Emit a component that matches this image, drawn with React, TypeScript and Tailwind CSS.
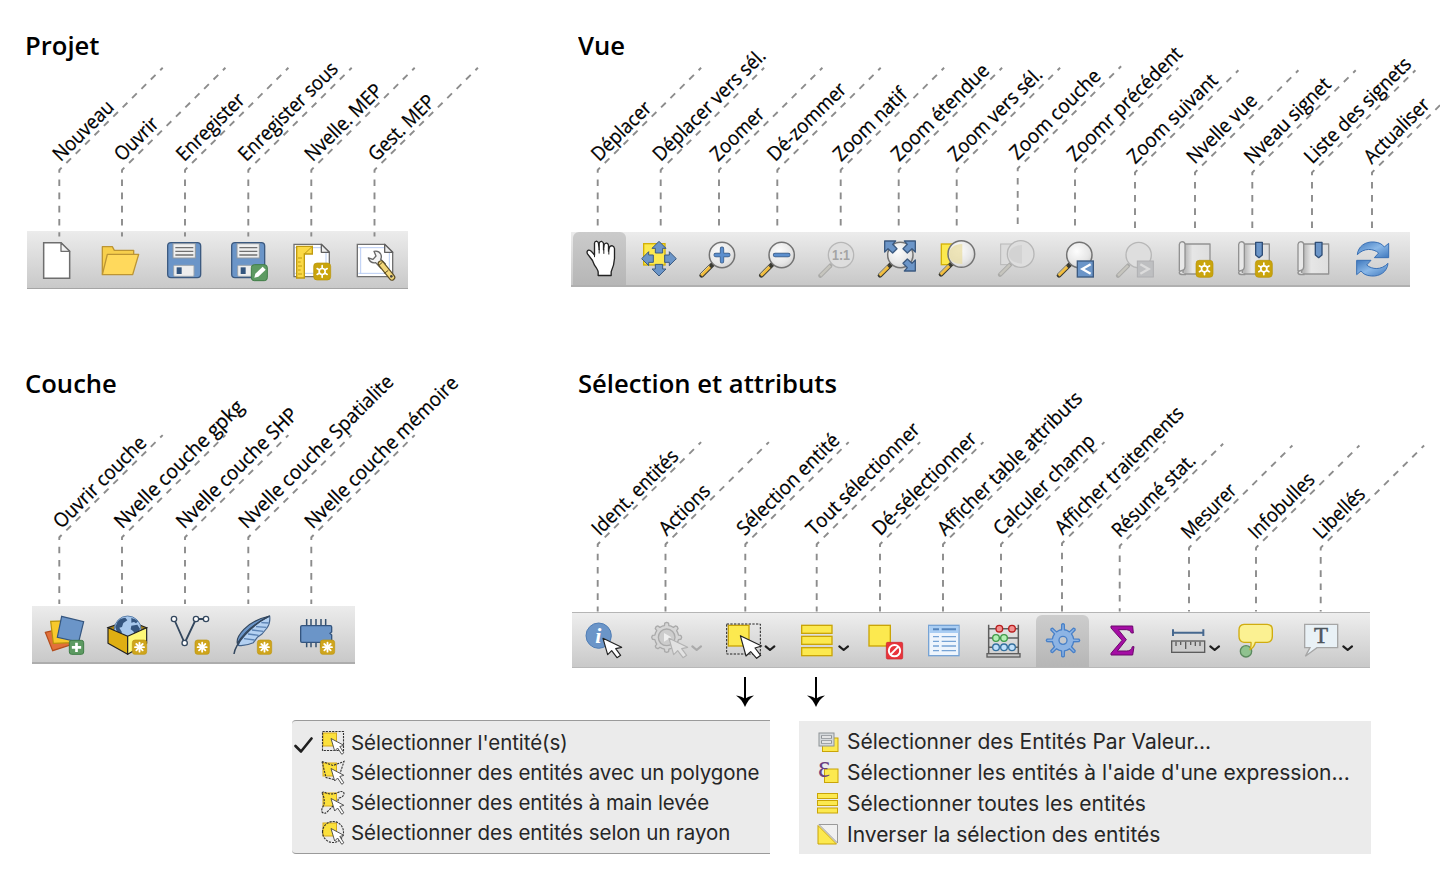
import type { ReactNode } from "react";

type Callout = { x: number; y: number; tx: number; text: string; len: number };

const BLUE = "#6b95c8";
const NAVY = "#3c5a80";
const YELLOW = "#fce94f";
const GOLD = "#c9a407";

const projet: Callout[] = [
  { x: 59.3, y: 170, tx: 61, text: "Nouveau", len: 76.5 },
  { x: 122, y: 170, tx: 122.5, text: "Ouvrir", len: 53 },
  { x: 185, y: 170, tx: 184.5, text: "Enregister", len: 87 },
  { x: 248.3, y: 170, tx: 246.5, text: "Enregister sous", len: 131 },
  { x: 311.3, y: 170, tx: 313, text: "Nvelle. MEP", len: 100 },
  { x: 374.5, y: 170, tx: 376.5, text: "Gest. MEP", len: 84.5 },
];

const vue: Callout[] = [
  { x: 597.7, y: 170, tx: 599.5, text: "Déplacer", len: 75.5 },
  { x: 660.7, y: 170, tx: 661, text: "Déplacer vers sél.", len: 149.5 },
  { x: 719, y: 170, tx: 718.5, text: "Zoomer", len: 67 },
  { x: 777.3, y: 170, tx: 775.5, text: "Dé-zommer", len: 102 },
  { x: 840.7, y: 170, tx: 841.5, text: "Zoom natif", len: 94.5 },
  { x: 898.7, y: 170, tx: 899.5, text: "Zoom étendue", len: 128.5 },
  { x: 956.7, y: 170, tx: 956.5, text: "Zoom vers sél.", len: 123 },
  { x: 1017.7, y: 168.5, tx: 1018, text: "Zoom couche", len: 118.5 },
  { x: 1075, y: 170, tx: 1075.5, text: "Zoomr précédent", len: 152.5 },
  { x: 1135, y: 172.5, tx: 1135.5, text: "Zoom suivant", len: 118 },
  { x: 1195, y: 172.5, tx: 1195, text: "Nvelle vue", len: 89.5 },
  { x: 1252.3, y: 172.5, tx: 1252.5, text: "Nveau signet", len: 112.5 },
  { x: 1312, y: 172.5, tx: 1312.5, text: "Liste des signets", len: 141 },
  { x: 1372, y: 172.5, tx: 1372, text: "Actualiser", len: 83.5 },
];

const couche: Callout[] = [
  { x: 59.3, y: 537.3, tx: 61.5, text: "Ouvrir couche", len: 121.5 },
  { x: 122, y: 537.3, tx: 122.5, text: "Nvelle couche gpkg", len: 172.5 },
  { x: 185, y: 537.3, tx: 184.5, text: "Nvelle couche SHP", len: 161.5 },
  { x: 248.3, y: 537.3, tx: 247, text: "Nvelle couche Spatialite", len: 208.5 },
  { x: 311.3, y: 537.3, tx: 313, text: "Nvelle couche mémoire", len: 206.5 },
];

const selection: Callout[] = [
  { x: 597.7, y: 544.3, tx: 600, text: "Ident. entités", len: 112.5 },
  { x: 665.5, y: 544.3, tx: 667, text: "Actions", len: 63 },
  { x: 745.3, y: 544.3, tx: 745, text: "Sélection entité", len: 135 },
  { x: 816.7, y: 544.3, tx: 814.5, text: "Tout sélectionner", len: 150.5 },
  { x: 880, y: 544.3, tx: 880.5, text: "Dé-sélectionner", len: 137.5 },
  { x: 943, y: 544.3, tx: 945.5, text: "Afficher table attributs", len: 194.5 },
  { x: 1001, y: 544.3, tx: 1001.5, text: "Calculer champ", len: 134 },
  { x: 1062, y: 543.3, tx: 1063, text: "Afficher traitements", len: 172 },
  { x: 1119.7, y: 546, tx: 1120, text: "Résumé stat.", len: 108.5 },
  { x: 1189, y: 547.7, tx: 1189.5, text: "Mesurer", len: 68.5 },
  { x: 1256, y: 547.7, tx: 1256.5, text: "Infobulles", len: 84 },
  { x: 1320.7, y: 547.7, tx: 1321.5, text: "Libellés", len: 63.5 },
];

function Callouts({ items, box, bottom, className }: { items: Callout[]; box: string; bottom: number; className: string }) {
  return (
    <svg viewBox={box} className={`relative block shrink-0 overflow-visible ${className}`}>
      {items.map((c) => (
        <g key={c.text}>
          <g stroke="#8c8c8c" strokeWidth="1.9" fill="none" strokeDasharray="6.6 6.6" strokeDashoffset="3.3">
            <path d={`M${c.x} ${c.y - 0.5}V${bottom}`} />
            <path d={`M${c.x} ${c.y}l103.4 -102.2`} />
          </g>
          <text
            x="0"
            y="0"
            transform={`translate(${c.tx - 0.3} ${c.y - 7.7}) rotate(-44.7)`}
            textLength={c.len}
            lengthAdjust="spacingAndGlyphs"
            fontSize="19.8"
            fill="#000"
            stroke="#000"
            strokeWidth="0.25"
          >
            {c.text}
          </text>
        </g>
      ))}
    </svg>
  );
}

function Heading({ children, className }: { children: string; className: string }) {
  return (
    <h2 className={`flex h-[60px] shrink-0 items-end ${className}`}>
      <span className="origin-left scale-x-[0.985] text-[26px] leading-[30px] font-semibold whitespace-nowrap">{children}</span>
    </h2>
  );
}

function Glyph({ x, y, wide, className = "", children }: { x: number; y: number; wide?: boolean; className?: string; children: ReactNode }) {
  return (
    <svg
      viewBox={`${x} ${y} ${wide ? 156 : 120} 120`}
      className={`h-10 shrink-0 overflow-visible ${wide ? "w-[52px]" : "w-10"} ${className}`}
      fill="none"
    >
      {children}
    </svg>
  );
}

function gear(cx: number, cy: number, outer: number, inner: number, teeth: number, base: number, tip: number) {
  const pts: string[] = [];
  const step = (Math.PI * 2) / teeth;
  for (let i = 0; i < teeth; i++) {
    const a = i * step - Math.PI / 2;
    const at = (r: number, d: number) => `${(cx + r * Math.cos(a + d * step)).toFixed(1)} ${(cy + r * Math.sin(a + d * step)).toFixed(1)}`;
    pts.push(at(inner, -base), at(outer - 2, -tip), at(outer, 0), at(outer - 2, tip), at(inner, base), at(inner, 0.5));
  }
  return `M${pts.join("L")}Z`;
}

function NewBadge({ x, y }: { x: number; y: number }) {
  return (
    <g>
      <rect x={x} y={y} width="51" height="51" rx="10" fill="#c9a40c" stroke="#b8940a" strokeWidth="2" />
      <g stroke="#fff" strokeWidth="5" strokeLinecap="round">
        {[0, 60, 120, 180, 240, 300].map((a) => (
          <path key={a} d={`M${x + 25.5} ${y + 15}V${y + 8}`} transform={`rotate(${a} ${x + 25.5} ${y + 25.5})`} />
        ))}
        <circle cx={x + 25.5} cy={y + 25.5} r="9" />
      </g>
    </g>
  );
}

function StarBadge({ x, y }: { x: number; y: number }) {
  return (
    <g>
      <rect x={x} y={y} width="43" height="43" rx="8" fill="#cfa51c" stroke="#bd9510" strokeWidth="2" />
      <g stroke="#fff" strokeWidth="5.5" strokeLinecap="round">
        {[0, 45, 90, 135].map((a) => (
          <path key={a} d={`M${x + 21.5} ${y + 8}v27`} transform={`rotate(${a} ${x + 21.5} ${y + 21.5})`} />
        ))}
      </g>
    </g>
  );
}

function Floppy({ dx }: { dx: number }) {
  return (
    <g transform={`translate(${dx} 0)`}>
      <rect x="443" y="668" width="99" height="105" rx="10" fill={BLUE} stroke={NAVY} strokeWidth="4" />
      <rect x="459" y="671" width="67" height="43" fill="#efefef" stroke="#8f979f" strokeWidth="3" />
      <path d="M466 683h54M466 694h54M466 705h54" stroke="#707070" strokeWidth="4" />
      <rect x="461" y="736" width="61" height="33" rx="3" fill="#eee" stroke="#9aa4ae" strokeWidth="3" />
      <rect x="470" y="742" width="15" height="20" fill="#33557e" />
    </g>
  );
}

function Page({ x }: { x: number }) {
  return (
    <g>
      <path d={`M${x} 673h82l24 24v73h-106z`} fill="#fff" stroke="#707070" strokeWidth="4" />
      <path d={`M${x + 10} 681v81M${x + 3} 683h78M${x + 96} 698v66M${x + 3} 760h98`} stroke="#b9cdf3" strokeWidth="3" />
      <path d={`M${x + 82} 673v24h24z`} fill="#eee" stroke="#606060" strokeWidth="4" strokeLinejoin="round" />
    </g>
  );
}

function Lens({ x, y, r = 38, off, children }: { x: number; y: number; r?: number; off?: boolean; children?: ReactNode }) {
  return (
    <g>
      {off ? (
        <>
          <path d={`M${x - 62} ${y + 62}l30 -30`} stroke="#aaaaa8" strokeWidth="13" strokeLinecap="round" />
          <path d={`M${x - 62} ${y + 62}l30 -30`} stroke="#c6c5be" strokeWidth="7" />
          <circle cx={x} cy={y} r={r} fill="#dedede" stroke="#b7b7b7" strokeWidth="4" />
        </>
      ) : (
        <>
          <path d={`M${x - 61} ${y + 61}l36 -36`} stroke="#3a3a32" strokeWidth="14" strokeLinecap="round" />
          <path d={`M${x - 62} ${y + 62}l26 -26`} stroke="#f3bd3c" strokeWidth="8" />
          <path d={`M${x - 64} ${y + 58}l26 -26`} stroke="#ffe79a" strokeWidth="2.5" />
          <circle cx={x} cy={y} r={r} fill="url(#glass)" stroke="#737373" strokeWidth="4.5" />
        </>
      )}
      {children}
    </g>
  );
}

function Scroll({ x }: { x: number }) {
  return (
    <g stroke="#929292" strokeWidth="4" strokeLinejoin="round">
      <path d={`M${x + 11} 671h81v90h-81z`} fill="url(#sheet)" />
      <path d={`M${x} 752V672q1 -7 8 -8q9 1 9 8v68q-1 10 -9 10q-9 2 -8 8q1 5 14 5h6`} fill="#e8e8e8" />
    </g>
  );
}

function Ribbon({ x }: { x: number }) {
  return <path d={`M${x} 666h20v38l-10 8l-10 -8z`} fill={BLUE} stroke="#2f4e77" strokeWidth="4" strokeLinejoin="round" />;
}

function Cursor({ x, y, off }: { x: number; y: number; off?: boolean }) {
  return (
    <path
      d={`M${x} ${y}l14 49l12 -12l16 21l11 -7l-15 -20l18 -4z`}
      fill={off ? "#e2e2e2" : "#fff"}
      stroke={off ? "#b2b2b2" : "#222"}
      strokeWidth="3.5"
      strokeLinejoin="round"
    />
  );
}

function Chevron({ x, off }: { x: number; off?: boolean }) {
  return <path d={`M${x} 860l13 11l13 -11`} stroke={off ? "#aaa" : "#1e1e1e"} strokeWidth="6.5" strokeLinecap="round" strokeLinejoin="round" />;
}

function Down({ className = "" }: { className?: string }) {
  return (
    <svg viewBox="0 0 18 30" className={`h-[30px] w-[18px] ${className}`}>
      <path d="M9 0v22" stroke="#000" strokeWidth="2" />
      <path d="M9 30C7 25 4 21 0 18.5C4 19 7 20 9 22C11 20 14 19 18 18.5C14 21 11 25 9 30Z" />
    </svg>
  );
}

function MenuIcon({ children }: { children: ReactNode }) {
  return (
    <svg viewBox="0 0 24 24" className="size-6 shrink-0 overflow-visible" fill="none">
      {children}
    </svg>
  );
}

function SelectMenuRow({ label, outline, checked }: { label: string; outline: string; checked?: boolean }) {
  return (
    <li className="flex h-[30px] items-center">
      <span className="flex w-[29px] shrink-0 items-center pt-1 pl-[2px]">
        {checked && (
          <svg viewBox="0 0 19 16" className="h-4 w-[19px]" fill="none">
            <path d="M1.5 9L7 14.5L17.5 1.5" stroke="#1f1f1f" strokeWidth="2.6" strokeLinecap="round" strokeLinejoin="round" />
          </svg>
        )}
      </span>
      <MenuIcon>
        <rect x="2" y="2" width="13.5" height="13" fill="#fbe03c" stroke="#d6a81a" strokeWidth="1" />
        <path d={outline} stroke="#333" strokeWidth="1.1" strokeDasharray="2.2 1" />
        <path d="M10 7.5l3.7 12.5l2.9 -3l4.2 6.3l2 -1.5l-4 -6.3l4 -1.2z" fill="#fff" stroke="#444" strokeWidth="0.9" strokeLinejoin="round" />
      </MenuIcon>
      <span className="ml-[6px] tracking-[-0.06px] whitespace-nowrap">{label}</span>
    </li>
  );
}

function ValueMenuRow({ label, children }: { label: string; children: ReactNode }) {
  return (
    <li className="flex h-[31px] items-center">
      <MenuIcon>{children}</MenuIcon>
      <span className="ml-[6px] text-[21px] whitespace-nowrap">{label}</span>
    </li>
  );
}

export default function App() {
  return (
    <main className="flex h-[892px] w-[1440px] flex-col overflow-hidden bg-white font-['Open_Sans','Noto_Sans',sans-serif] text-black">
      <svg className="absolute size-0">
        <defs>
          <radialGradient id="glass" cx="0.4" cy="0.35" r="0.7">
            <stop offset="0" stopColor="#fdfdfd" />
            <stop offset="0.7" stopColor="#e6e6e6" />
            <stop offset="1" stopColor="#d0d0d0" />
          </radialGradient>
          <linearGradient id="sheet">
            <stop offset="0.1" stopColor="#bbb" />
            <stop offset="0.35" stopColor="#e6e6e6" />
            <stop offset="1" stopColor="#dedede" />
          </linearGradient>
          <linearGradient id="swirl" x1="0" y1="0" x2="1" y2="1">
            <stop offset="0" stopColor="#3f78bd" />
            <stop offset="0.5" stopColor="#8ab8e8" />
            <stop offset="1" stopColor="#3f78bd" />
          </linearGradient>
        </defs>
      </svg>

      <div className="flex h-[338px] shrink-0">
        <section className="flex w-[547px] shrink-0 flex-col">
          <Heading className="pl-[25px]">Projet</Heading>
          <Callouts items={projet} box="0 60 547 171" bottom={236.6} className="z-10 h-[171px] w-[547px]" />
          <div className="ml-[27px] flex h-[58px] w-[381px] shrink-0 items-center border-b border-[#a5a5a5] bg-linear-to-b from-[#ececec] to-[#c9c9c9]">
            <Glyph x={51} y={660} className="ml-[10px]">
              <path d="M71 668h52l26 26v81h-78z" fill="#fff" stroke="#6e6e6e" strokeWidth="4.5" />
              <path d="M123 668v26h26z" fill="#f2f2f2" stroke="#6e6e6e" strokeWidth="4" strokeLinejoin="round" />
            </Glyph>
            <Glyph x={240} y={660} className="ml-[23px]">
              <path d="M247 763V680h30l6 11h58v16" fill="#f7cf4c" stroke="#bc9534" strokeWidth="4" strokeLinejoin="round" />
              <path d="M247 764l15 -61h94l-18 61z" fill="#ffd95c" stroke="#bc9534" strokeWidth="4" strokeLinejoin="round" />
            </Glyph>
            <Glyph x={432} y={660} className="ml-[24px]">
              <Floppy dx={0} />
            </Glyph>
            <Glyph x={627} y={660} className="ml-[25px]">
              <Floppy dx={192} />
              <rect x="694" y="734" width="48" height="48" rx="9" fill="#5d9a62" stroke="#3f7d46" strokeWidth="3" />
              <path d="M703 773l3 -12l22 -21l9 9l-22 21z" fill="#fff" />
            </Glyph>
            <Glyph x={816} y={660} className="ml-[23px]">
              <Page x={822} />
              <path d="M830 679h47v23h-24v72h-23z" fill="#fbd946" stroke="#c09a10" strokeWidth="4" />
              <path d="M853 702l24 -23M834 714h12M834 726h8M834 738h12M834 750h8M834 762h12" stroke="#c09a10" strokeWidth="3" />
              <NewBadge x={881} y={729} />
            </Glyph>
            <Glyph x={1008} y={660} className="ml-[24px]">
              <Page x={1012} />
              <path d="M1062 694q14 -3 20 8q4 8 0 16l14 14l-13 13l-16 -17q-16 3 -22 -14l14 4l9 -10z" fill="#f4f4f4" stroke="#666" strokeWidth="4" strokeLinejoin="round" />
              <path d="M1083 731l33 41" stroke="#5c4d24" strokeWidth="20" strokeLinecap="round" />
              <path d="M1083 731l33 41" stroke="#f3d77a" strokeWidth="13" strokeLinecap="round" />
              <path d="M1088 726l-11 10M1105 751l-12 9" stroke="#5c4d24" strokeWidth="3" />
              <circle cx="1114" cy="769" r="4" fill="#444" />
            </Glyph>
          </div>
        </section>

        <section className="flex w-[893px] shrink-0 flex-col">
          <Heading className="pl-[31px]">Vue</Heading>
          <Callouts items={vue} box="547 60 893 172" bottom={228} className="h-[172px] w-[893px]" />
          <div className="ml-[24px] flex h-[55px] w-[839px] shrink-0 items-center border-b-2 border-[#b0b0b0] bg-linear-to-b from-[#ececec] to-[#c8c8c8]">
            <div className="ml-[2px] flex h-full w-[53px] shrink-0 items-center justify-center rounded-t-md bg-linear-to-b from-[#cbcbcb] to-[#b6b6b6]">
              <Glyph x={22.5} y={25.5}>
                <path
                  d="M77 135V124Q76 118 66 104L60 90L45 70Q41 62 48 59Q55 58 66 74V38Q67 32 72 32Q77 33 78 39L80 57V38Q83 32 88 33Q93 35 93 40V58L95 42Q98 37 103 38Q108 40 108 45V62L111 50Q114 45 120 46Q125 48 126 54V84Q125 104 116 124V135Z"
                  fill="#fff"
                  stroke="#222"
                  strokeWidth="4"
                  strokeLinejoin="round"
                />
                <path d="M66 72v8M80 55v14M94 56v14M109 60v12" stroke="#222" strokeWidth="3" />
              </Glyph>
            </div>
            <Glyph x={237} y={656} className="ml-[13px]">
              <rect x="251" y="670" width="64" height="64" fill={YELLOW} stroke="#d4b106" strokeWidth="4" />
              {[0, 90, 180, 270].map((a) => (
                <path key={a} d="M297 663l21 21h-10v14h-22v-14h-10z" transform={`rotate(${a} 297 715)`} fill={BLUE} stroke={NAVY} strokeWidth="3" strokeLinejoin="round" />
              ))}
              <rect x="283" y="701" width="28" height="28" fill={YELLOW} />
            </Glyph>
            <Glyph x={414} y={656} className="ml-[19px]">
              <Lens x={486} y={704}>
                <path d="M486 685v38M467 704h38" stroke={NAVY} strokeWidth="13" strokeLinecap="round" />
                <path d="M486 685v38M467 704h38" stroke="#5c8fce" strokeWidth="9" strokeLinecap="round" />
              </Lens>
            </Glyph>
            <Glyph x={591} y={656} className="ml-[19px]">
              <Lens x={665} y={704}>
                <path d="M645 704h40" stroke={NAVY} strokeWidth="13" strokeLinecap="round" />
                <path d="M645 704h40" stroke="#5c8fce" strokeWidth="9" strokeLinecap="round" />
              </Lens>
            </Glyph>
            <Glyph x={771} y={656} className="ml-[20px]">
              <Lens x={843} y={704} off>
                <text x="843" y="719" textAnchor="middle" fontSize="43" fontWeight="700" fontFamily="Liberation Sans, sans-serif" fill="#a4a4a4" textLength="54" lengthAdjust="spacingAndGlyphs">
                  1:1
                </text>
              </Lens>
            </Glyph>
            <Glyph x={951} y={656} className="ml-[20px]">
              <Lens x={1021} y={704} />
              {["", "translate(2040 0) scale(-1 1)", "translate(2040 1414) scale(-1 -1)"].map((t) => (
                <path key={t} d="M974 662h33l-9 10l13 13l-13 13l-14 -13l-10 10z" transform={t} fill={BLUE} stroke={NAVY} strokeWidth="4" strokeLinejoin="round" />
              ))}
            </Glyph>
            <Glyph x={1128} y={656} className="ml-[19px]">
              <rect x="1144" y="671" width="62" height="62" fill={YELLOW} stroke="#d4b106" strokeWidth="4" />
              <Lens x={1204} y={701} r={40}>
                <path d="M1207 671v60q-40 0 -40 -30q3 -29 40 -30z" fill="#e8dc9c" opacity="0.7" />
              </Lens>
            </Glyph>
            <Glyph x={-12} y={656} className="ml-[20px]">
              <rect x="2" y="671" width="62" height="62" fill="#dcdcdc" stroke="#b8b8b8" strokeWidth="3" />
              <Lens x={62} y={701} r={40} off>
                <path d="M66 674v56q-40 -4 -40 -28q3 -26 40 -28z" fill="#cfcfcf" opacity="0.7" />
              </Lens>
            </Glyph>
            <Glyph x={165} y={656} className="ml-[19px]">
              <Lens x={238} y={704} />
              <rect x="232" y="722" width="48" height="48" fill={BLUE} stroke={NAVY} strokeWidth="4" />
              <path d="M272 732l-25 14l25 14" stroke="#fff" strokeWidth="7" />
            </Glyph>
            <Glyph x={345} y={656} className="ml-[20px]">
              <Lens x={416} y={704} off />
              <rect x="412" y="722" width="48" height="48" fill="#bebfc1" stroke="#afafb2" strokeWidth="3" />
              <path d="M421 732l25 14l-25 14" stroke="#dcdcdc" strokeWidth="7" />
            </Glyph>
            <Glyph x={528} y={656} className="ml-[21px]">
              <Scroll x={538} />
              <NewBadge x={588} y={720} />
            </Glyph>
            <Glyph x={705} y={656} className="ml-[19px]">
              <Scroll x={716} />
              <Ribbon x={767} />
              <NewBadge x={766} y={720} />
            </Glyph>
            <Glyph x={879} y={656} className="ml-[18px]">
              <Scroll x={894} />
              <Ribbon x={946} />
            </Glyph>
            <Glyph x={1059} y={656} className="ml-[20px]">
              {[0, 180].map((a) => (
                <path
                  key={a}
                  d="M1072 703C1074 678 1096 663 1122 665C1138 666 1147 672 1153 680L1166 669V712H1123L1136 698C1120 684 1092 682 1072 703Z"
                  transform={`rotate(${a} 1118 716)`}
                  fill="url(#swirl)"
                  stroke="#3a70b4"
                  strokeWidth="3"
                  strokeLinejoin="round"
                />
              ))}
            </Glyph>
          </div>
        </section>
      </div>

      <div className="flex h-[330px] shrink-0">
        <section className="flex w-[547px] shrink-0 flex-col">
          <Heading className="pl-[25px]">Couche</Heading>
          <Callouts items={couche} box="0 398 547 208" bottom={604} className="h-[208px] w-[547px]" />
          <div className="ml-[32px] flex h-[58px] w-[323px] shrink-0 items-center border-b-2 border-[#adadad] bg-linear-to-b from-[#ececec] to-[#c9c9c9]">
            <Glyph x={72} y={762} className="ml-[12px]">
              <path d="M76 817l60 -14l14 52l-52 17z" fill="#e2703a" stroke="#b34d1c" strokeWidth="3.5" />
              <path d="M92 784l62 -2l2 66l-56 2z" fill="#f7c92c" stroke="#b8920c" strokeWidth="3.5" />
              <path d="M125 769l66 16l-15 61l-64 -14z" fill={BLUE} stroke="#34557f" strokeWidth="3.5" />
              <rect x="148" y="841" width="43" height="42" rx="7" fill="#5d9a62" stroke="#3f7d46" strokeWidth="3" />
              <path d="M169.5 848v28M155.5 862h28" stroke="#fff" strokeWidth="8" />
            </Glyph>
            <Glyph x={261} y={762} className="ml-[23px]">
              <path d="M264 803l30 -11h58l28 11l-57 26z" fill="#a4811a" stroke="#222" strokeWidth="3.5" />
              <circle cx="323" cy="808" r="40" fill="#a8c8ec" stroke="#5a7fab" strokeWidth="3" />
              <path d="M292 786q8 -12 24 -13l6 8l-12 8l-4 12l-8 2l8 14l-6 8q-12 -10 -14 -24zM334 774q12 2 20 10l-6 6l-6 -4l-8 2zM334 797l18 -3l8 12l-4 14l-10 8l-6 -14l-8 -6z" fill="#34557f" />
              <path d="M264 803l59 26v54l-59 -33z" fill="#dfaf12" stroke="#222" strokeWidth="3.5" strokeLinejoin="round" />
              <path d="M323 829l57 -26v47l-57 33z" fill="#fdf878" stroke="#222" strokeWidth="3.5" strokeLinejoin="round" />
              <StarBadge x={337} y={840} />
            </Glyph>
            <Glyph x={450} y={762} className="ml-[23px]">
              <path d="M462 777l32 72l34 -72h30" stroke="#33475e" strokeWidth="5.5" />
              {[[462, 777], [494, 849], [528, 777], [558, 777]].map(([cx, cy]) => (
                <circle key={cx} cx={cx} cy={cy} r="8" fill="#fff" stroke="#33475e" strokeWidth="4" />
              ))}
              <StarBadge x={525} y={840} />
            </Glyph>
            <Glyph x={639} y={762} className="ml-[23px]">
              <path d="M655 856C662 826 700 786 749 768C751 784 747 796 741 804L726 822L712 832L700 848C686 854 668 858 655 856Z" fill="#b4d1f2" stroke="#44648c" strokeWidth="3.5" strokeLinejoin="round" />
              <path d="M684 822l32 4M696 810l34 4M708 800l32 2M724 788l22 1M672 836l32 4" stroke="#5b83b4" strokeWidth="4" />
              <path d="M652 850C648 832 676 784 749 768C712 786 676 812 652 850Z" fill="#6b95c8" stroke="#33475e" strokeWidth="3.5" />
              <path d="M642 882C646 852 690 798 746 769" stroke="#33475e" strokeWidth="4.5" />
              <StarBadge x={712} y={840} />
            </Glyph>
            <Glyph x={831} y={762} className="ml-[24px]">
              <path d="M860 777v22M873 777v22M888 777v22M903 777v22M917 777v22M860 840v22M873 840v22M888 840v22M903 840v22" stroke="#34506f" strokeWidth="4.5" />
              <path d="M846 797h85q4 0 4 4v15l-5 4l5 5v18q0 4 -4 4h-85q-4 0 -4 -4v-42q0 -4 4 -4z" fill={BLUE} stroke="#34557f" strokeWidth="4" />
              <StarBadge x={901} y={840} />
            </Glyph>
          </div>
        </section>

        <section className="flex w-[893px] shrink-0 flex-col">
          <Heading className="pl-[31px]">Sélection et attributs</Heading>
          <Callouts items={selection} box="547 398 893 214" bottom={611.5} className="h-[214px] w-[893px]" />
          <div className="ml-[25px] flex h-[56px] w-[798px] shrink-0 items-center border-y border-t-[#b5b5b5] border-b-[#b8b8b8] bg-linear-to-b from-[#eeeeee] to-[#c9c9c9]">
            <Glyph x={69} y={781} className="ml-[11px]">
              <circle cx="116" cy="828" r="38" fill={BLUE} stroke="#4f7db5" strokeWidth="3" />
              <text x="115" y="850" textAnchor="middle" fontSize="66" fontStyle="italic" fontWeight="700" fontFamily="Liberation Serif, serif" fill="#fff">
                i
              </text>
              <Cursor x={129} y={836} />
            </Glyph>
            <Glyph x={270} y={781} wide className="ml-[27px]">
              <path d={gear(320, 833, 45, 36, 8, 0.24, 0.17)} fill="#d6d6d6" stroke="#aaa" strokeWidth="4" strokeLinejoin="round" />
              <circle cx="320" cy="833" r="25" fill="#cdcdcd" stroke="#aaa" strokeWidth="4" />
              <path d="M312 820l22 13l-22 13z" fill="#efefef" />
              <Cursor x={327} y={836} off />
              <Chevron x={397} off />
            </Glyph>
            <Glyph x={495} y={781} wide className="ml-[23px]">
              <rect x="505" y="797" width="62" height="62" fill={YELLOW} stroke={GOLD} strokeWidth="4" />
              <rect x="500" y="793" width="101" height="90" stroke="#222" strokeWidth="3" strokeDasharray="7 4" />
              <path d="M541 828l17 61l14 -13l18 20l12 -9l-17 -22l20 -6z" fill="#fff" stroke="#222" strokeWidth="3.5" strokeLinejoin="round" />
              <Chevron x={617} />
            </Glyph>
            <Glyph x={717} y={781} wide className="ml-[22px]">
              {[797, 830, 864].map((y) => (
                <rect key={y} x="725" y={y} width="91" height="24" fill={YELLOW} stroke={GOLD} strokeWidth="4" />
              ))}
              <Chevron x={838} />
            </Glyph>
            <Glyph x={918} y={781} className="ml-[15px]">
              <rect x="927" y="797" width="64" height="62" fill={YELLOW} stroke={GOLD} strokeWidth="4" />
              <rect x="979" y="848" width="49" height="50" rx="4" fill="#e8333a" stroke="#cc2028" strokeWidth="2" />
              <circle cx="1003.5" cy="873" r="17" stroke="#fff" strokeWidth="6" />
              <path d="M992 884l23 -23" stroke="#fff" strokeWidth="6" />
            </Glyph>
            <Glyph x={1092} y={781} className="ml-[18px]">
              <rect x="1106" y="797" width="91" height="91" fill="#eef5fd" stroke="#76a3d5" strokeWidth="4" />
              <rect x="1108" y="799" width="87" height="21" fill="#a9cdf3" />
              <path d="M1119 809h18M1145 809h43" stroke="#5585bd" strokeWidth="6" />
              <path d="M1119 831h18M1119 845h18M1119 859h18M1119 873h18M1145 831h43M1145 845h43M1145 859h43M1145 873h43" stroke="#76a3d5" strokeWidth="4" />
            </Glyph>
            <Glyph x={9} y={781} className="ml-[19px]">
              <path d="M26 795v90M115 795v90M26 807h89M26 835h89M26 863h89" stroke="#5e5e5e" strokeWidth="4.5" />
              <rect x="21" y="882" width="99" height="10" fill="#c9c9c9" stroke="#5e5e5e" strokeWidth="4" />
              {[[58, 807, "#f29090", "#b81e1e"], [96, 807, "#f29090", "#b81e1e"], [48, 835, "#b4efb4", "#3f9a48"], [72, 835, "#b4efb4", "#3f9a48"], [48, 863, "#c0e0fb", "#34709f"], [72, 863, "#c0e0fb", "#34709f"], [96, 863, "#c0e0fb", "#34709f"]].map(([cx, cy, f, s]) => (
                <circle key={`${cx}-${cy}`} cx={cx} cy={cy} r="10" fill={f as string} stroke={s as string} strokeWidth="4" />
              ))}
            </Glyph>
            <div className="mt-[2px] ml-[13px] flex h-[52px] w-[53px] shrink-0 items-center justify-center rounded-t-md bg-linear-to-b from-[#cdcdcd] to-[#b6b6b6] pb-[2px]">
              <Glyph x={189} y={781}>
                <path d={gear(249, 842, 50, 32, 8, 0.17, 0.1)} fill="#8db4e4" stroke="#4880c8" strokeWidth="4" strokeLinejoin="round" />
                <circle cx="249" cy="842" r="12" fill="#c4c8cd" stroke="#4880c8" strokeWidth="4" />
              </Glyph>
            </div>
            <Glyph x={366} y={781} className="ml-[13px]">
              <path d="M393 799h65l2 21h-6q-3 -10 -14 -10h-25l24 30l-27 34h28q14 0 17 -13h5l-4 25h-65v-5l33 -39l-33 -37z" fill="#a50da5" stroke="#6c086c" strokeWidth="3" strokeLinejoin="round" />
            </Glyph>
            <Glyph x={567} y={781} wide className="ml-[27px]">
              <path d="M579 819h91M579 809v20M670 809v20" stroke="#46688f" strokeWidth="6" />
              <rect x="575" y="844" width="99" height="34" fill="#cdcdcd" stroke="#5c5c5c" strokeWidth="4" />
              <path d="M588 846v13M602 846v10M617 846v22M632 846v10M646 846v13M660 846v13" stroke="#5c5c5c" strokeWidth="4" />
              <Chevron x={691} />
            </Glyph>
            <Glyph x={768} y={781} className="ml-[15px]">
              <circle cx="798" cy="875" r="17" fill="#8fc28f" stroke="#5b8a5e" strokeWidth="4" />
              <path d="M792 794h70q15 1 15 17v19q0 17 -15 18h-36q-3 15 -16 22q4 -10 3 -22h-21q-15 -1 -15 -18v-19q0 -16 15 -17z" fill="#fbf192" stroke="#d0ac10" strokeWidth="4" strokeLinejoin="round" />
            </Glyph>
            <Glyph x={966} y={781} wide className="ml-[26px]">
              <path d="M974 794h99v70h-62l-35 26l14 -26h-16z" fill="#e9f1f6" stroke="#a6a6a6" strokeWidth="4" />
              <text x="1023" y="851" textAnchor="middle" fontSize="69" fontFamily="Liberation Serif, serif" fill="#4e565c" stroke="#4e565c" strokeWidth="1.5">
                T
              </text>
              <Chevron x={1090} />
            </Glyph>
          </div>
        </section>
      </div>

      <div className="flex h-[52px] shrink-0 items-start pt-[9px] pl-[736px]">
        <Down />
        <Down className="ml-[53px]" />
      </div>

      <div className="flex shrink-0 items-start pl-[292px] font-['Inter',sans-serif] text-[20.5px] leading-[30px] text-[#262626]">
        <ul className="h-[134px] w-[478px] shrink-0 rounded-l-[4px] border-y border-[#9a9a9a] bg-[#ebebeb] pt-[7px]">
          <SelectMenuRow checked label="Sélectionner l'entité(s)" outline="M1.5 0.5h21v19h-21z" />
          <SelectMenuRow label="Sélectionner des entités avec un polygone" outline="M1 0.5l11 4l11 -4l-4 12M1 0.5l4 16l8 2" />
          <SelectMenuRow label="Sélectionner des entités à main levée" outline="M1 2q1 -2 4 0q5 2 11 0q5 -3 7 0q0 4 -5 5q-2 2 0 6M1 2q3 5 2 12q-3 4 -2 7q3 3 6 -1l5 -5" />
          <SelectMenuRow label="Sélectionner des entités selon un rayon" outline="M1.5 11a10.5 10.5 0 0 1 21 0a10.5 10.5 0 0 1 -21 0z" />
        </ul>
        <ul className="mt-px ml-[29px] h-[133px] w-[572px] shrink-0 bg-[#ebebeb] pt-[5px] pl-[18px]">
          <ValueMenuRow label="Sélectionner des Entités Par Valeur...">
            <rect x="5.5" y="8" width="15.5" height="13.5" fill={YELLOW} stroke={GOLD} />
            <rect x="2" y="3" width="15" height="13" fill="#d5d9dc" stroke="#8e9396" />
            <path d="M4 7h11M4 12h11" stroke="#8e9396" strokeWidth="3.5" />
            <path d="M5 7h9M5 12h9" stroke="#fff" strokeWidth="1.5" />
          </ValueMenuRow>
          <ValueMenuRow label="Sélectionner les entités à l'aide d'une expression...">
            <rect x="7.5" y="8" width="13.5" height="13.5" fill={YELLOW} stroke={GOLD} />
            <text x="1" y="15.5" fontSize="32" fontFamily="Liberation Serif, serif" fill="#6b3f80" textLength="12" lengthAdjust="spacingAndGlyphs">
              ε
            </text>
          </ValueMenuRow>
          <ValueMenuRow label="Sélectionner toutes les entités">
            {[1.5, 8.5, 16].map((y) => (
              <rect key={y} x="0.5" y={y} width="20" height="5" fill={YELLOW} stroke={GOLD} />
            ))}
          </ValueMenuRow>
          <ValueMenuRow label="Inverser la sélection des entités">
            <path d="M2 1.5h18.5v18.5z" fill="#f0f0f0" stroke="#9a9a9a" />
            <path d="M1 2.5v18.5h18.5z" fill={YELLOW} stroke={GOLD} />
          </ValueMenuRow>
        </ul>
      </div>
    </main>
  );
}
